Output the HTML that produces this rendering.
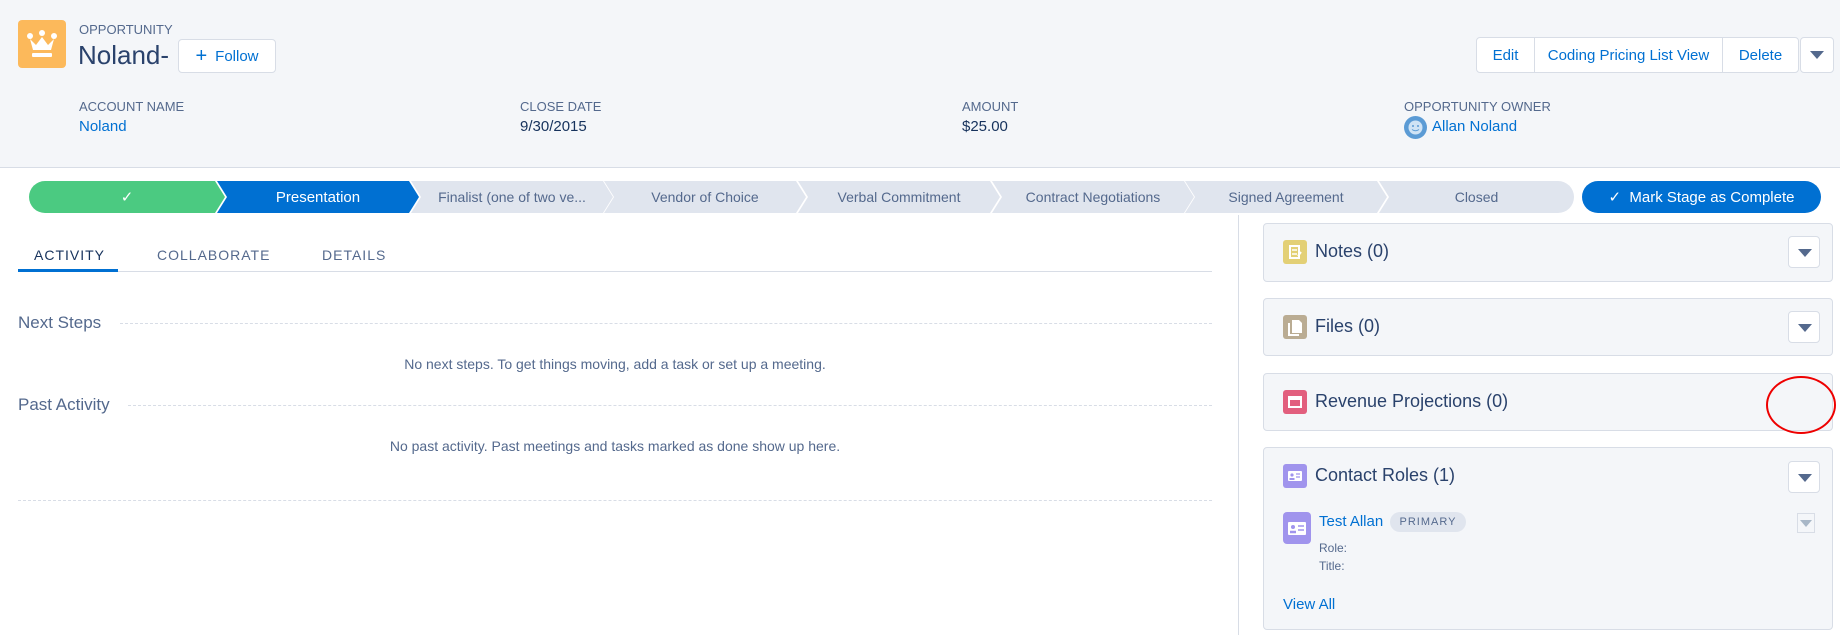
<!DOCTYPE html>
<html><head><meta charset="utf-8"><style>
*{box-sizing:border-box;margin:0;padding:0}
body{width:1840px;height:635px;overflow:hidden;background:#fff;font-family:"Liberation Sans",sans-serif;color:#16325c;position:relative}
.abs{position:absolute}
.hdr{left:0;top:0;width:1840px;height:168px;background:#f4f6f9;border-bottom:1px solid #d8dde6}
.lbl{font-size:13px;color:#54698d}
.val{font-size:15px}
.link{color:#0070d2}
.btn{background:#fff;border:1px solid #d8dde6;color:#0070d2;font-size:15px;display:flex;align-items:center;justify-content:center}
.seg{top:181px;height:32px;display:flex;align-items:center;justify-content:center;font-size:15px;color:#54698d;background:#e0e5ee}
.card{left:1263px;width:570px;background:#f4f6f9;border:1px solid #d8dde6;border-radius:4px}
.ic{width:24px;height:24px;border-radius:3px}
.ct{font-size:18px;color:#2a426c;top:0}
.dd{width:32px;height:32px;background:#fff;border:1px solid #d8dde6;border-radius:4px}
.dd:after{content:"";position:absolute;left:9px;top:12px;border-left:7px solid transparent;border-right:7px solid transparent;border-top:8px solid #54698d}
.dash{border-top:1px dashed #d8dde6;height:0}
</style></head><body>
<div class="abs hdr"></div>
<div class="abs" style="left:18px;top:20px;width:48px;height:48px;background:#fcb95b;border-radius:4px">
<svg width="48" height="48" viewBox="0 0 48 48"><g fill="#fff"><circle cx="12" cy="16" r="3"/><circle cx="24" cy="13" r="3"/><circle cx="36" cy="16" r="3"/><path d="M12 19 L15 30 L33 30 L36 19 L30 25 L24 17 L18 25 Z"/><rect x="14" y="33" width="20" height="4" rx="1"/></g></svg></div>
<div class="abs" style="left:79px;top:22px;font-size:13px;color:#54698d">OPPORTUNITY</div>
<div class="abs" style="left:78px;top:40px;font-size:26px;color:#2a426c">Noland-</div>
<div class="abs btn" style="left:178px;top:39px;width:98px;height:34px;border-radius:4px"><span style="font-size:20px;margin-right:8px">+</span>Follow</div>
<div class="abs btn" style="left:1476px;top:37px;width:59px;height:36px;border-radius:4px 0 0 4px">Edit</div>
<div class="abs btn" style="left:1534px;top:37px;width:189px;height:36px">Coding Pricing List View</div>
<div class="abs btn" style="left:1722px;top:37px;width:77px;height:36px;border-radius:0 4px 4px 0">Delete</div>
<div class="abs btn" style="left:1800px;top:37px;width:34px;height:36px;border-radius:4px"><span style="border-left:7px solid transparent;border-right:7px solid transparent;border-top:8px solid #54698d"></span></div>
<div class="abs lbl" style="left:79px;top:99px">ACCOUNT NAME</div>
<div class="abs val link" style="left:79px;top:118px">Noland</div>
<div class="abs lbl" style="left:520px;top:99px">CLOSE DATE</div>
<div class="abs val" style="left:520px;top:118px">9/30/2015</div>
<div class="abs lbl" style="left:962px;top:99px">AMOUNT</div>
<div class="abs val" style="left:962px;top:118px">$25.00</div>
<div class="abs lbl" style="left:1404px;top:99px">OPPORTUNITY OWNER</div>
<div class="abs" style="left:1404px;top:116px;width:23px;height:23px;border-radius:50%;background:#5b9bd5"><svg width="23" height="23"><circle cx="11.5" cy="11.5" r="7" fill="#cfe3f5"/><circle cx="9" cy="10" r="1" fill="#5b9bd5"/><circle cx="14" cy="10" r="1" fill="#5b9bd5"/><path d="M8 13.5 Q11.5 16 15 13.5" stroke="#5b9bd5" fill="none"/></svg></div>
<div class="abs val link" style="left:1432px;top:118px">Allan Noland</div>

<div class="abs seg" style="left:29px;width:196px;background:#4bca81;color:#fff;border-radius:16px 0 0 16px;clip-path:polygon(0 0,186px 0,196px 50%,186px 100%,0 100%)">✓</div>
<div class="abs seg" style="left:217px;width:202px;background:#0070d2;color:#fff;clip-path:polygon(0 0,192px 0,202px 50%,192px 100%,0 100%,10px 50%)">Presentation</div>
<div class="abs seg" style="left:411px;width:202px;font-size:14px;clip-path:polygon(0 0,192px 0,202px 50%,192px 100%,0 100%,10px 50%)">Finalist (one of two ve...</div>
<div class="abs seg" style="left:604px;width:202px;font-size:14px;clip-path:polygon(0 0,192px 0,202px 50%,192px 100%,0 100%,10px 50%)">Vendor of Choice</div>
<div class="abs seg" style="left:798px;width:202px;font-size:14px;clip-path:polygon(0 0,192px 0,202px 50%,192px 100%,0 100%,10px 50%)">Verbal Commitment</div>
<div class="abs seg" style="left:992px;width:202px;font-size:14px;clip-path:polygon(0 0,192px 0,202px 50%,192px 100%,0 100%,10px 50%)">Contract Negotiations</div>
<div class="abs seg" style="left:1185px;width:202px;font-size:14px;clip-path:polygon(0 0,192px 0,202px 50%,192px 100%,0 100%,10px 50%)">Signed Agreement</div>
<div class="abs seg" style="left:1379px;width:195px;font-size:14px;border-radius:0 16px 16px 0;clip-path:polygon(0 0,195px 0,195px 100%,0 100%,10px 50%)">Closed</div>
<div class="abs" style="left:1582px;top:181px;width:239px;height:32px;border-radius:16px;background:#0070d2;color:#fff;font-size:15px;display:flex;align-items:center;justify-content:center">✓&nbsp;&nbsp;Mark Stage as Complete</div>

<div class="abs" style="left:18px;top:271px;width:1194px;height:1px;background:#d8dde6"></div>
<div class="abs" style="left:18px;top:269px;width:100px;height:3px;background:#0070d2"></div>
<div class="abs" style="left:34px;top:247px;font-size:14px;letter-spacing:1px">ACTIVITY</div>
<div class="abs" style="left:157px;top:247px;font-size:14px;letter-spacing:1px;color:#54698d">COLLABORATE</div>
<div class="abs" style="left:322px;top:247px;font-size:14px;letter-spacing:1px;color:#54698d">DETAILS</div>
<div class="abs" style="left:18px;top:313px;font-size:17px;color:#54698d">Next Steps</div>
<div class="abs dash" style="left:120px;top:323px;width:1092px"></div>
<div class="abs" style="left:18px;top:356px;width:1194px;text-align:center;font-size:14px;color:#54698d">No next steps. To get things moving, add a task or set up a meeting.</div>
<div class="abs" style="left:18px;top:395px;font-size:17px;color:#54698d">Past Activity</div>
<div class="abs dash" style="left:128px;top:405px;width:1084px"></div>
<div class="abs" style="left:18px;top:438px;width:1194px;text-align:center;font-size:14px;color:#54698d">No past activity. Past meetings and tasks marked as done show up here.</div>
<div class="abs dash" style="left:18px;top:500px;width:1194px"></div>
<div class="abs" style="left:1238px;top:215px;width:1px;height:420px;background:#d8dde6"></div>

<div class="abs card" style="top:223px;height:59px"></div>
<div class="abs ic" style="left:1283px;top:240px;background:#e3d076"><svg width="24" height="24"><rect x="7" y="6" width="9" height="12" fill="none" stroke="#fff" stroke-width="2"/><path d="M9 10h5M9 14h5" stroke="#fff" stroke-width="1.5"/><path d="M15 16l3-4" stroke="#fff" stroke-width="2"/></svg></div>
<div class="abs ct" style="left:1315px;top:241px">Notes (0)</div>
<div class="abs dd" style="left:1788px;top:236px"></div>
<div class="abs card" style="top:298px;height:58px"></div>
<div class="abs ic" style="left:1283px;top:315px;background:#baac93"><svg width="24" height="24"><path d="M9 5h7l3 3v10H9z" fill="#fff"/><path d="M6 8v12h10" fill="none" stroke="#fff" stroke-width="2"/></svg></div>
<div class="abs ct" style="left:1315px;top:316px">Files (0)</div>
<div class="abs dd" style="left:1788px;top:311px"></div>
<div class="abs card" style="top:373px;height:58px"></div>
<div class="abs ic" style="left:1283px;top:390px;background:#e25f7e"><div style="margin:6px 5px;width:14px;height:12px;border:2px solid #fff;border-top-width:4px"></div></div>
<div class="abs ct" style="left:1315px;top:391px">Revenue Projections (0)</div>
<div class="abs" style="left:1766px;top:376px;width:70px;height:58px;border:2px solid #e00;border-radius:50%"></div>
<div class="abs card" style="top:447px;height:183px"></div>
<div class="abs ic" style="left:1283px;top:464px;background:#a094ed"><svg width="24" height="24"><rect x="5" y="7" width="14" height="10" rx="1" fill="#fff"/><circle cx="9" cy="11" r="1.6" fill="#a094ed"/><path d="M6.5 15h5" stroke="#a094ed" stroke-width="2"/><path d="M13 10h4M13 13h4" stroke="#a094ed" stroke-width="1.3"/></svg></div>
<div class="abs ct" style="left:1315px;top:465px">Contact Roles (1)</div>
<div class="abs dd" style="left:1788px;top:461px"></div>
<div class="abs" style="left:1283px;top:512px;width:28px;height:32px;border-radius:4px;background:#a094ed"><svg width="28" height="32"><rect x="5" y="10" width="18" height="13" rx="1" fill="#fff"/><circle cx="10" cy="15" r="2" fill="#a094ed"/><path d="M7 20h6" stroke="#a094ed" stroke-width="2.5"/><path d="M15 14h6M15 18h6" stroke="#a094ed" stroke-width="1.5"/></svg></div>
<div class="abs link" style="left:1319px;top:513px;font-size:15px">Test Allan</div>
<div class="abs" style="left:1390px;top:512px;width:76px;height:20px;border-radius:10px;background:#e0e5ee;font-size:11px;letter-spacing:1px;color:#54698d;display:flex;align-items:center;justify-content:center">PRIMARY</div>
<div class="abs" style="left:1797px;top:513px;width:18px;height:20px;border:1px solid #d8dde6;background:#f4f6f9"><span style="position:absolute;left:2px;top:6px;border-left:6px solid transparent;border-right:6px solid transparent;border-top:7px solid #a8b7c7"></span></div>
<div class="abs" style="left:1319px;top:541px;font-size:12px;color:#54698d">Role:</div>
<div class="abs" style="left:1319px;top:559px;font-size:12px;color:#54698d">Title:</div>
<div class="abs link" style="left:1283px;top:596px;font-size:15px">View All</div>
</body></html>
